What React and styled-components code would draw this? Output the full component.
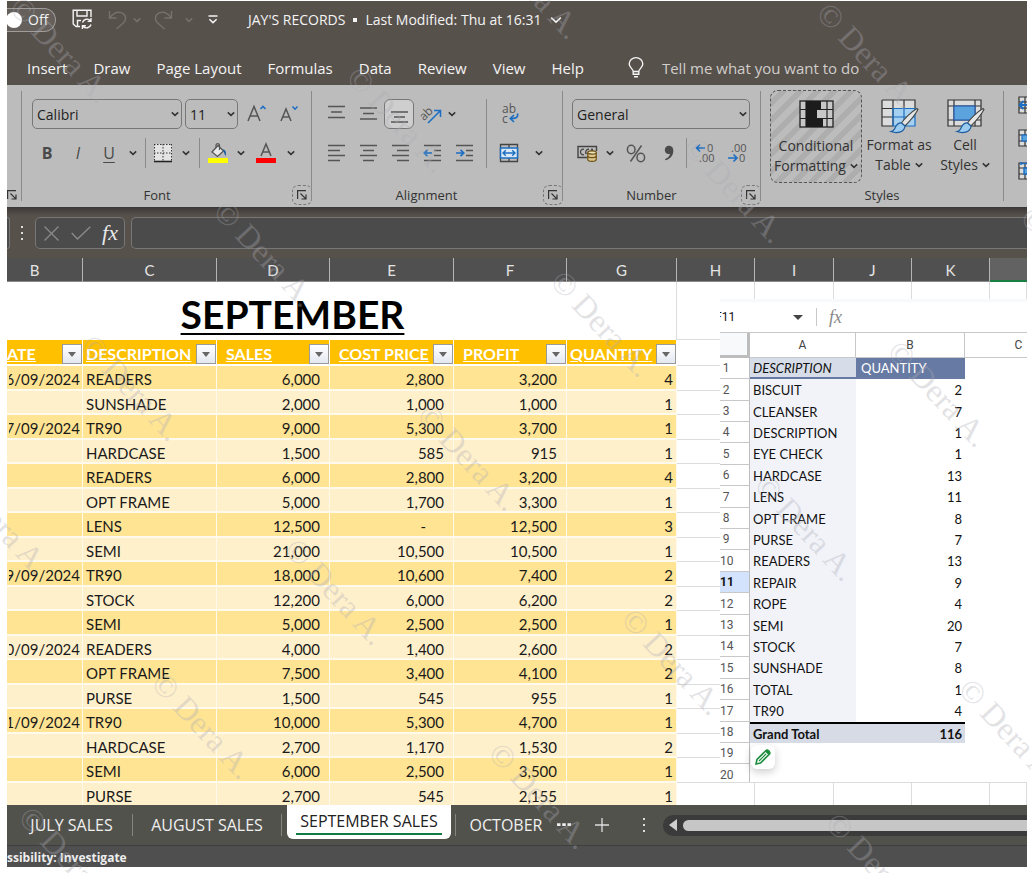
import styled, { createGlobalStyle, css } from "styled-components";

const uiFont = `"Open Sans", "Noto Sans", sans-serif`;
const cellFont = `Lato, "Open Sans", sans-serif`;

const GlobalStyle = createGlobalStyle`
  * {
    box-sizing: border-box;
  }
  body {
    margin: 0;
    background: #fff;
    font-family: ${uiFont};
  }
  button, input, select {
    margin: 0;
    padding: 0;
    border: none;
    background: none;
    color: inherit;
    font: inherit;
    outline: none;
  }
  svg {
    display: block;
    flex: none;
    overflow: visible;
  }
`;

const menuTabs = ["Insert", "Draw", "Page Layout", "Formulas", "Data", "Review", "View", "Help"];

const sales = [
  ["6/09/2024", "READERS", "6,000", "2,800", "3,200", "4"],
  ["", "SUNSHADE", "2,000", "1,000", "1,000", "1"],
  ["7/09/2024", "TR90", "9,000", "5,300", "3,700", "1"],
  ["", "HARDCASE", "1,500", "585", "915", "1"],
  ["", "READERS", "6,000", "2,800", "3,200", "4"],
  ["", "OPT FRAME", "5,000", "1,700", "3,300", "1"],
  ["", "LENS", "12,500", "-", "12,500", "3"],
  ["", "SEMI", "21,000", "10,500", "10,500", "1"],
  ["9/09/2024", "TR90", "18,000", "10,600", "7,400", "2"],
  ["", "STOCK", "12,200", "6,000", "6,200", "2"],
  ["", "SEMI", "5,000", "2,500", "2,500", "1"],
  ["0/09/2024", "READERS", "4,000", "1,400", "2,600", "2"],
  ["", "OPT FRAME", "7,500", "3,400", "4,100", "2"],
  ["", "PURSE", "1,500", "545", "955", "1"],
  ["1/09/2024", "TR90", "10,000", "5,300", "4,700", "1"],
  ["", "HARDCASE", "2,700", "1,170", "1,530", "2"],
  ["", "SEMI", "6,000", "2,500", "3,500", "1"],
  ["", "PURSE", "2,700", "545", "2,155", "1"],
];

const columns = [
  { letter: "B", width: 76, title: "ATE", pad: 0 },
  { letter: "C", width: 134, title: "DESCRIPTION", pad: 3 },
  { letter: "D", width: 113, title: "SALES", pad: 9 },
  { letter: "E", width: 124, title: "COST PRICE", pad: 9 },
  { letter: "F", width: 113, title: "PROFIT", pad: 9 },
  { letter: "G", width: 110, title: "QUANTITY", pad: 3 },
];

const emptyColumns = [
  { letter: "H", width: 78 },
  { letter: "I", width: 79 },
  { letter: "J", width: 78 },
  { letter: "K", width: 78 },
];

const pivot = [
  ["BISCUIT", 2],
  ["CLEANSER", 7],
  ["DESCRIPTION", 1],
  ["EYE CHECK", 1],
  ["HARDCASE", 13],
  ["LENS", 11],
  ["OPT FRAME", 8],
  ["PURSE", 7],
  ["READERS", 13],
  ["REPAIR", 9],
  ["ROPE", 4],
  ["SEMI", 20],
  ["STOCK", 7],
  ["SUNSHADE", 8],
  ["TOTAL", 1],
  ["TR90", 4],
];

/* ---------- icons ---------- */

const Chevron = ({ size = 8, color = "#333" }) => (
  <svg width={size} height={size} viewBox="0 0 8 8" fill="none" stroke={color} strokeWidth={size > 8 ? 1 : 1.5}>
    <path d="M0.8 2.4 4 5.4 7.2 2.4" />
  </svg>
);

const SaveIcon = () => (
  <svg width="21" height="21" viewBox="0 0 21 21" fill="none" stroke="#f4f4f4" strokeWidth="1.4">
    <path d="M8 17.5H4L1.2 15V1.2H19V8" />
    <path d="M5 1.5V7H15V1.5M5.5 17V11.5H9" />
    <path d="M10.5 13.5A4.6 4.6 0 0 1 18.6 12M19 9V12.4H15.6M19 15.5A4.6 4.6 0 0 1 11 17.2M10.4 20V16.7H13.8" />
  </svg>
);

const UndoIcon = () => (
  <svg width="19" height="20" viewBox="0 0 19 20" fill="none" stroke="#77716c" strokeWidth="1.4">
    <path d="M1.5 1V8H8.5M2 7.5C5 3.5 9 1.5 13 2.6C18 4 19 9.5 15.5 12.8L8.5 19" />
  </svg>
);

const RedoIcon = () => (
  <svg width="19" height="20" viewBox="0 0 19 20" fill="none" stroke="#77716c" strokeWidth="1.4">
    <path d="M17.5 1V8H10.5M17 7.5C14 3.5 10 1.5 6 2.6C1 4 0 9.5 3.5 12.8L10.5 19" />
  </svg>
);

const QuickAccessIcon = () => (
  <svg width="10" height="9" viewBox="0 0 10 9" fill="none" stroke="#f4f4f4" strokeWidth="1.5">
    <path d="M0.5 1H9.5M1.4 4.2 5 7.6 8.6 4.2" />
  </svg>
);

const BulbIcon = () => (
  <svg width="16" height="21" viewBox="0 0 16 21" fill="none" stroke="#f4f4f4" strokeWidth="1.4">
    <path d="M5.2 14.5C5.2 12 1.2 10.5 1.2 7A6.6 6.2 0 0 1 14.8 7C14.8 10.5 10.8 12 10.8 14.5ZM5.2 14.5V17.2H10.8V14.5M6 19.8H10" />
  </svg>
);

const LauncherIcon = () => (
  <svg width="10" height="10" viewBox="0 0 10 10" fill="none" stroke="#333" strokeWidth="1.2">
    <path d="M0.6 9V0.6H9M3.5 3.5 8.6 8.6M9 4.5V9H4.5" />
  </svg>
);

const FontSizeIcon = ({ up }) => (
  <svg width="20" height="20" viewBox="0 0 20 20" fill="none" strokeWidth="1.5">
    <path
      d={up ? "M1 17 7 2.5 13 17M3.2 12H10.8" : "M2 17 7 5 12 17M3.8 13H10.2"}
      stroke="#555"
    />
    <path d={up ? "M13.5 5 16 2.4 18.5 5" : "M13.5 2.6 16 5.2 18.5 2.6"} stroke="#1b6ec2" />
  </svg>
);

const BordersIcon = () => (
  <svg width="20" height="20" viewBox="0 0 20 20">
    <rect x="1" y="1" width="18" height="17" fill="#e4e4e4" />
    <path d="M1.5 1V18M18.5 1V18M10 1V18M1 1.5H19M1 10H19" stroke="#333" strokeDasharray="1.5 1.5" fill="none" />
    <path d="M1 18.5H19" stroke="#222" strokeWidth="1.6" />
  </svg>
);

const FillIcon = () => (
  <svg width="20" height="20" viewBox="0 0 20 20">
    <path d="M4 9 10 2.5 15.5 8 9.5 13.5Z" fill="#e8e8e8" stroke="#555" strokeWidth="1.3" />
    <path d="M8 5V2A1.8 1.8 0 0 1 11.5 2V7" fill="none" stroke="#555" strokeWidth="1.2" />
    <path d="M14.5 6.5C17.5 6.5 18.5 9 17.8 13C16.2 11.5 16.5 9.5 14.5 6.5Z" fill="#1b5c9e" />
    <rect y="15" width="20" height="5" fill="#ff0" />
  </svg>
);

const FontColorIcon = () => (
  <svg width="20" height="20" viewBox="0 0 20 20">
    <path d="M5 13 10 1 15 13M6.8 9H13.2" fill="none" stroke="#555" strokeWidth="1.5" />
    <rect y="15" width="20" height="5" fill="#f00" />
  </svg>
);

const lineShapes = {
  top: "M1 2.5H18M4 8H15M1 13.5H18",
  middle: "M1 4H18M4 9.5H15M1 15H18",
  bottom: "M1 8H18M4 13H15M1 18H18",
  left: "M1 2.5H18M1 7.5H13M1 12.5H18M1 17.5H13",
  center: "M1 2.5H18M4 7.5H15M1 12.5H18M4 17.5H15",
  right: "M1 2.5H18M6 7.5H18M1 12.5H18M6 17.5H18",
};

const LinesIcon = ({ shape }) => (
  <svg width="19" height="20" viewBox="0 0 19 20">
    <path d={lineShapes[shape]} fill="none" stroke="#555" strokeWidth="1.3" />
  </svg>
);

const IndentIcon = ({ out }) => (
  <svg width="19" height="20" viewBox="0 0 19 20" fill="none" strokeWidth="1.3">
    <path d="M1 2.5H18M11 7.5H18M11 12.5H18M1 17.5H18" stroke="#555" />
    <path d={out ? "M9 10H1.5M4.5 6.8 1.3 10 4.5 13.2" : "M1 10H8.5M5.5 6.8 8.7 10 5.5 13.2"} stroke="#1b6ec2" strokeWidth="1.7" />
  </svg>
);

const OrientationIcon = () => (
  <svg width="22" height="22" viewBox="0 0 22 22">
    <text x="0" y="15" fontFamily="Open Sans" fontSize="12" fill="#555" transform="rotate(-45 6 12)">ab</text>
    <path d="M8 20 20 8M14 7.5H20.5V14" fill="none" stroke="#1b6ec2" strokeWidth="1.5" />
  </svg>
);

const WrapIcon = () => (
  <svg width="18" height="22" viewBox="0 0 18 22">
    <text x="1" y="10" fontFamily="Open Sans" fontSize="12" fill="#555">ab</text>
    <text x="1" y="20" fontFamily="Open Sans" fontSize="12" fill="#555">c</text>
    <path d="M16.5 10.5C17.5 15 14 15.5 9.5 15.5M13 12 9.3 15.5 13 19" fill="none" stroke="#1b6ec2" strokeWidth="1.7" />
  </svg>
);

const MergeIcon = () => (
  <svg width="20" height="20" viewBox="0 0 20 20" fill="none">
    <path d="M1.5 1.5H18.5V18.5H1.5ZM10 1.5V5M10 15V18.5" stroke="#444" strokeWidth="1.3" />
    <rect x="1.5" y="5" width="17" height="10" fill="#dbe8f5" stroke="#1b6ec2" strokeWidth="1.5" />
    <path d="M4 10H16M6.8 7.2 4 10 6.8 12.8M13.2 7.2 16 10 13.2 12.8" stroke="#1b6ec2" strokeWidth="1.4" />
  </svg>
);

const CurrencyIcon = () => (
  <svg width="21" height="18" viewBox="0 0 21 18" fill="none">
    <path d="M10 13.5H1V2.5H19.5V7" stroke="#444" strokeWidth="1.4" />
    <path d="M7 5.3A2.8 2.8 0 1 0 7 10.7M12 5.3A2.8 2.8 0 0 0 9.5 10M14 7 15 5.2 16 7" stroke="#444" strokeWidth="1.3" />
    <path d="M10.8 8.5V15.5C10.8 18 19.2 18 19.2 15.5V8.5" fill="#d8c391" stroke="#6b500f" strokeWidth="1.2" />
    <ellipse cx="15" cy="8.5" rx="4.2" ry="1.6" fill="#efe3c0" stroke="#6b500f" strokeWidth="1.2" />
    <path d="M10.8 12C10.8 14.2 19.2 14.2 19.2 12" stroke="#6b500f" strokeWidth="1.2" />
  </svg>
);

const PercentIcon = () => (
  <svg width="20" height="19" viewBox="0 0 20 19" fill="none" stroke="#555" strokeWidth="1.5">
    <ellipse cx="5.2" cy="5.5" rx="3.8" ry="4.2" />
    <ellipse cx="14.8" cy="13.5" rx="3.8" ry="4.2" />
    <path d="M15.5 1.5 4.5 17.5" />
  </svg>
);

const CommaIcon = () => (
  <svg width="10" height="16" viewBox="0 0 10 16">
    <path d="M4.8 0.8C8 0.8 9.6 3.2 9.3 6.4C9 10.5 6.3 13.8 1.5 15.2L1 14C4.2 12.8 5.8 11 6 8.8C3.2 9.8 0.8 7.8 0.8 5C0.8 2.4 2.6 0.8 4.8 0.8Z" fill="#4a4a4a" />
  </svg>
);

const DecimalIcon = ({ more }) => (
  <svg width="20" height="22" viewBox="0 0 20 22" fontFamily="Open Sans" fontSize="11" fill="#555">
    <text x={more ? 12 : 4} y="10">{more ? "0" : ".00"}</text>
    <text x={more ? 4 : 12} y="20">{more ? ".00" : "0"}</text>
    <path
      d={more ? "M10 6H1.5M5 2.5 1.5 6 5 9.5" : "M1 16H10M6.5 12.5 10 16 6.5 19.5"}
      fill="none"
      stroke="#1b6ec2"
      strokeWidth="1.6"
    />
  </svg>
);

const ConditionalIcon = () => (
  <svg width="35" height="28" viewBox="0 0 35 28">
    <rect x="1" y="1" width="33" height="26" fill="#c8c8c8" stroke="#222" strokeWidth="1.3" />
    <path d="M1 9.5H34M1 18.5H34M7 1V27M28 1V27" stroke="#222" strokeWidth="1.2" />
    <path d="M7 1H22V9.5H18V18.5H24V27H7Z" fill="#1c1c1c" />
  </svg>
);

const Brush = () => (
  <>
    <path d="M36 9.5C30 13 23 20 20.5 24L24 27C28 23 34 16 37 10.5Z" fill="#e6e6e6" stroke="#444" strokeWidth="1.1" />
    <path d="M20.5 24C16 23.5 15 27 13.5 30C12.8 31.5 11.5 32.3 10 32.5C15 34.5 23.5 34 24 27Z" fill="#9ccbf0" stroke="#1b5c9e" strokeWidth="1.2" />
  </>
);

const FormatTableIcon = () => (
  <svg width="36" height="35" viewBox="0 0 36 35">
    <rect x="1" y="1" width="33" height="26" fill="#dcdcdc" />
    <rect x="12" y="9.5" width="22" height="17.5" fill="#a6d0f0" />
    <path d="M1 1H34V9.5M1 1V27H12M1 9.5H34M1 18H12M12 1V27M23 1V9.5" fill="none" stroke="#333" strokeWidth="1.2" />
    <path d="M12 9.5V27H34V9.5ZM23 9.5V27M12 18H34" fill="none" stroke="#1b6ec2" strokeWidth="1.2" />
    <Brush />
  </svg>
);

const CellStylesIcon = () => (
  <svg width="36" height="35" viewBox="0 0 36 35">
    <rect x="1" y="1" width="33" height="26" fill="#dcdcdc" />
    <path d="M1 1H34V27H1ZM1 7H34M1 21H34M7 1V27M28 1V27" fill="none" stroke="#333" strokeWidth="1.2" />
    <rect x="7" y="7" width="21" height="14" fill="#5ba3dc" stroke="#2a5db0" strokeWidth="1.2" />
    <Brush />
  </svg>
);

const CellsIcon = ({ shape }) => (
  <svg width="20" height="18" viewBox="0 0 20 18" fill="none">
    <path d="M1 1H19V17H1ZM7 1V17M1 6H19M1 12H19" fill="#dcdcdc" stroke="#333" strokeWidth="1.2" />
    {shape === "insert" && <path d="M12 9H1.5M5.5 5 1.5 9 5.5 13" stroke="#1b6ec2" strokeWidth="1.8" />}
    {shape === "delete" && <rect x="4" y="6" width="12" height="6" fill="#5ba3dc" stroke="#1b6ec2" strokeWidth="1.2" />}
    {shape === "format" && <path d="M6 6H16V12H6ZM3 0V3M3 1.5H12" fill="#5ba3dc" stroke="#1b6ec2" strokeWidth="1.4" />}
  </svg>
);

const PencilIcon = () => (
  <svg width="16" height="16" viewBox="0 0 16 16">
    <path d="M1 15 2 10.5 11 1.5C12.5 0.2 15.8 3.2 14.5 5L5.5 14Z" fill="#fff" stroke="#1e8e3e" strokeWidth="1.6" />
    <path d="M10 2.5 11.8 1C13 0 16 3 15 4.2L13.5 6Z" fill="#1e8e3e" />
    <path d="M4 12 11 5" stroke="#1e8e3e" strokeWidth="1.2" />
  </svg>
);

/* ---------- page ---------- */

const Page = styled.div`
  position: relative;
  min-height: 100vh;
  padding: 1px 5px 5px 7px;
  overflow: hidden;
`;

const Workbook = styled.main`
  overflow: hidden;
  background: #57514c;
`;

const TitleBar = styled.header`
  display: flex;
  align-items: center;
  height: 37px;
  color: #f4f4f4;
  font-size: 14px;
  white-space: nowrap;
`;

const AutoSave = styled.label`
  display: flex;
  align-items: center;
  gap: 6px;
  width: 50px;
  height: 24px;
  margin: 0 11px 0 -1px;
  border: 1px solid #a09c99;
  border-left: none;
  border-radius: 0 12px 12px 0;
  background: #65605c;
  font-size: 14px;
  input {
    appearance: none;
    width: 16px;
    height: 16px;
    border-radius: 50%;
    background: #fff;
  }
`;

const QuickButton = styled.button`
  display: flex;
  align-items: center;
  justify-content: center;
  width: ${({ $w }) => $w}px;
  height: 24px;
`;

const FileName = styled.h1`
  display: flex;
  align-items: center;
  gap: 8px;
  margin: 0 0 0 11px;
  font-size: 14px;
  font-weight: 400;
  i {
    width: 4px;
    height: 4px;
    background: #f4f4f4;
  }
`;

const MenuBar = styled.nav`
  display: flex;
  align-items: center;
  gap: 26px;
  height: 47px;
  padding: 12px 20px 0;
  color: #f4f4f4;
  font-size: 15px;
  white-space: nowrap;
`;

const TellMe = styled.label`
  display: flex;
  flex: 1;
  align-items: center;
  gap: 18px;
  margin-left: 18px;
  input {
    flex: 1;
    min-width: 0;
    &::placeholder {
      color: #d0cdca;
      opacity: 1;
    }
  }
`;

/* ---------- ribbon ---------- */

const Ribbon = styled.section`
  display: flex;
  height: 123px;
  overflow: hidden;
  background: #bcbcbc;
  border-bottom: 1px solid #3b3836;
  color: #333;
  font-size: 14px;
`;

const Group = styled.div`
  position: relative;
  display: flex;
  flex: none;
  flex-direction: column;
  justify-content: space-between;
  width: ${({ $w }) => $w}px;
  padding: ${({ $top = 14 }) => $top}px 0 1px ${({ $left = 9 }) => $left}px;
  &::after {
    content: "";
    position: absolute;
    top: 6px;
    right: 0;
    bottom: 6px;
    width: 1px;
    background: #8a8a8a;
  }
`;

const GroupFooter = styled.div`
  display: flex;
  align-items: center;
  height: 22px;
  font-size: 13px;
  span {
    flex: 1;
    margin-right: 10px;
    text-align: center;
  }
`;

const Launcher = styled.button`
  display: flex;
  align-items: center;
  justify-content: center;
  width: 20px;
  height: 20px;
  border: ${({ $plain }) => ($plain ? "none" : "1px dashed #777")};
  border-radius: 6px;
`;

const ClipboardLauncher = styled(Launcher)`
  width: 10px;
`;

const Rows = styled.div`
  display: flex;
  flex-direction: column;
  gap: 9px;
`;

const Row = styled.div`
  display: flex;
  align-items: center;
  height: 30px;
`;

const Side = styled.div`
  display: flex;
`;

const Tool = styled.button`
  display: flex;
  flex: none;
  align-items: center;
  justify-content: center;
  width: ${({ $w = 32 }) => $w}px;
  height: 30px;
  color: #4a4a4a;
  font-size: 16px;
  font-weight: ${({ $bold }) => ($bold ? 700 : 400)};
  font-style: ${({ $italic }) => ($italic ? "italic" : "normal")};
  ${({ $underline }) => $underline && css`
    text-decoration: underline;
    text-underline-offset: 3px;
  `}
  ${({ $pressed }) => $pressed && css`
    border: 1px solid #777;
    border-radius: 6px;
    background: #cecece;
  `}
`;

const Rule = styled.span`
  flex: none;
  align-self: stretch;
  width: 1px;
  margin: 0 ${({ $gap = 3 }) => $gap}px;
  background: #8a8a8a;
`;

const SelectBox = styled.div`
  position: relative;
  display: flex;
  width: ${({ $w }) => $w}px;
  height: 30px;
  margin-right: 3px;
  select {
    width: 100%;
    padding-left: 4px;
    border: 1px solid #777;
    border-radius: 5px;
    appearance: none;
    color: #222;
    font-size: 14px;
  }
  svg {
    position: absolute;
    top: 11px;
    right: 3px;
    pointer-events: none;
  }
`;

const StyleButtons = styled.div`
  display: flex;
  gap: 4px;
`;

const StyleButton = styled.button`
  display: flex;
  flex-direction: column;
  align-items: center;
  width: ${({ $w }) => $w}px;
  height: 93px;
  padding-top: 9px;
  border-radius: 8px;
  font-size: 14px;
  line-height: 20px;
  white-space: nowrap;
  ${({ $striped }) => $striped && css`
    border: 1px dashed #555;
    background: repeating-linear-gradient(135deg, #bcbcbc 0 6px, #aeaeae 6px 12px);
  `}
  .art {
    height: 36px;
  }
  .more {
    display: flex;
    align-items: center;
    gap: 4px;
  }
`;

const CellTools = styled.div`
  display: flex;
  flex: 1;
  flex-direction: column;
  gap: 15px;
  padding: 11px 0 0 14px;
  overflow: hidden;
`;

/* ---------- formula bar ---------- */

const FormulaBar = styled.div`
  display: flex;
  align-items: center;
  height: 50px;
  background: linear-gradient(#3f3b38, #57514c 8px);
`;

const NameBoxEnd = styled.span`
  width: 3px;
  height: 32px;
  border: 1px solid #777;
  border-left: none;
  border-radius: 0 5px 5px 0;
  background: #4b4b4b;
`;

const Dots = styled.span`
  flex: none;
  width: 2px;
  height: 14px;
  margin: 0 12px 0 11px;
  background: repeating-linear-gradient(#ddd 0 2px, transparent 2px 6px);
`;

const FormulaButtons = styled.div`
  display: flex;
  align-items: center;
  justify-content: space-between;
  width: 90px;
  height: 32px;
  margin-right: 6px;
  padding: 0 6px 0 8px;
  border: 1px solid #777;
  border-radius: 5px;
  background: #4b4b4b;
  color: #e8e8e8;
  .fx {
    font: italic 22px/24px "Liberation Serif", serif;
  }
`;

const FormulaInput = styled.input`
  flex: 1;
  height: 32px;
  border: 1px solid #777;
  border-right: none;
  border-radius: 5px 0 0 5px;
  background: #4b4b4b;
  color: #fff;
`;

/* ---------- worksheet ---------- */

const Sheet = styled.section`
  position: relative;
  height: 547px;
  overflow: hidden;
  background: #fff;
`;

const Grid = styled.table`
  width: 100%;
  border-spacing: 0;
  table-layout: fixed;
  color: #1a1a1a;
  font-family: ${cellFont};
  font-size: 15px;
  th, td {
    padding: 0;
    white-space: nowrap;
  }
`;

const Letters = styled.tr`
  height: 24px;
  background: #505050;
  th {
    border-right: 1px solid #b5b5b5;
    border-bottom: 1px solid #8a8a8a;
    color: #e4e4e4;
    font-weight: 400;
  }
  th:first-child {
    padding-right: 20px;
  }
  th:last-child {
    border-right: none;
    border-bottom: 2px solid #1a7f43;
    background: #626262;
  }
`;

const EmptyCell = styled.td`
  border-right: 1px solid #dcdcdc;
  border-bottom: 1px solid #dcdcdc;
`;

const TitleRow = styled.tr`
  height: 58px;
`;

const SheetTitle = styled.th`
  && {
    padding: 5px 98px 0 0;
  }
  border-right: 1px solid #dcdcdc;
  color: #000;
  font-size: 39px;
  line-height: 52px;
  font-weight: 700;
  text-align: center;
  text-decoration: underline;
  text-decoration-thickness: 2px;
  text-underline-offset: 4px;
`;

const HeaderRow = styled.tr`
  height: 26px;
`;

const HeaderCell = styled.th`
  border-right: 1px solid #fff;
  border-bottom: 2px solid #fff;
  background: #ffc000;
  color: #fff;
  font-size: 16px;
  > div {
    display: flex;
    align-items: flex-end;
    justify-content: space-between;
    height: 24px;
    padding-left: ${({ $pad }) => $pad}px;
    line-height: 20px;
    text-decoration: underline;
  }
`;

const FilterButton = styled.button`
  display: flex;
  flex: none;
  align-items: center;
  justify-content: center;
  width: 20px;
  height: 20px;
  border: 1px solid #9a9a9a;
  background: linear-gradient(#fff, #e4e8f0);
  &::before {
    content: "";
    border: 4px solid transparent;
    border-top: 5px solid #666;
    border-bottom: none;
  }
`;

const SaleRow = styled.tr`
  height: 24px;
  background: #fff0cc;
  &:nth-child(odd) {
    height: 25px;
    background: #ffe494;
  }
`;

const SaleCell = styled.td`
  border-right: 1px solid #fffaec;
  border-bottom: 2px solid #fffaec;
  line-height: 18px;
  && {
    padding: 3px ${({ $pad }) => $pad}px 0;
  }
  text-align: ${({ $right }) => ($right ? "right" : "left")};
`;

const DateText = styled.div`
  display: flex;
  justify-content: flex-end;
  overflow: hidden;
`;

const BlankCell = styled(EmptyCell)`
  background: #fff;
`;

/* ---------- pasted pivot sheet ---------- */

const Pasted = styled.div`
  position: absolute;
  top: 41px;
  left: 713px;
  right: 0;
  height: 483px;
  overflow: hidden;
  border-top: 3px solid #f8f9fa;
  background: #fff;
  color: #111;
  font-family: ${cellFont};
  font-size: 13px;
`;

const PastedBar = styled.div`
  display: flex;
  align-items: center;
  height: 31px;
  border-bottom: 1px solid #c8c8c8;
  font: 12px Roboto, sans-serif;
  .cell {
    width: 78px;
    margin-left: -5px;
  }
  .caret {
    border: 5px solid transparent;
    border-top-color: #444;
    border-bottom: none;
  }
  .line {
    width: 1px;
    height: 18px;
    margin: 0 12px 0 13px;
    background: #c8c8c8;
  }
  .fx {
    color: #888;
    font: italic 18px "Liberation Serif", serif;
  }
`;

const PivotTable = styled.table`
  width: 100%;
  border-spacing: 0;
  table-layout: fixed;
  th, td {
    padding: 0 3px;
    text-align: left;
    font-weight: 400;
    line-height: 18px;
    white-space: nowrap;
  }
  thead th {
    height: 25px;
    border-right: 1px solid #c8c8c8;
    border-bottom: 1px solid #c8c8c8;
    color: #444;
    font: 12px Roboto, sans-serif;
    text-align: center;
  }
  thead th:first-child {
    border-right: 3px solid #bdbdbd;
    border-bottom: 3px solid #bdbdbd;
    background: #f8f9fa;
  }
`;

const PivotRow = styled.tr`
  height: 21px;
  &:nth-child(5n + 2), &:nth-child(5n) {
    height: 22px;
  }
  td:nth-child(2) {
    background: ${({ $head }) => ($head ? "#d6dde8" : "#f1f3f9")};
    font-style: ${({ $head }) => ($head ? "italic" : "normal")};
  }
  td:nth-child(3) {
    text-align: right;
  }
  ${({ $head }) => $head && css`
    td {
      line-height: 16px;
    }
    td:nth-child(2), td:nth-child(3) {
      border-bottom: 2px solid #667aa3;
    }
    td:nth-child(3) {
      padding-left: 5px;
      background: #667aa3;
      color: #fff;
      text-align: left;
    }
  `}
  ${({ $total }) => $total && css`
    td:nth-child(2), td:nth-child(3) {
      border-top: 2px solid #000;
      background: #d6dbe6;
      font-weight: 700;
    }
  `}
  ${({ $blank }) => $blank && css`
    td:nth-child(2) {
      background: none;
    }
  `}
`;

const RowNumber = styled.th`
  && {
    padding: 0 17px 0 0;
    border-right: 1px solid #bdbdbd;
    border-bottom: 1px solid #c8c8c8;
    background: ${({ $active }) => ($active ? "#d3e3fd" : "#fff")};
    color: ${({ $active }) => ($active ? "#111" : "#555")};
    font: ${({ $active }) => ($active ? 700 : 400)} 12px/18px Roboto, sans-serif;
    text-align: center;
  }
`;

const EditBadge = styled.button`
  position: absolute;
  top: 443px;
  left: 31px;
  display: flex;
  align-items: center;
  justify-content: center;
  width: 24px;
  height: 24px;
  border-radius: 6px;
  background: #fff;
  box-shadow: 0 3px 8px rgba(0, 0, 0, 0.2);
`;

/* ---------- bottom bars ---------- */

const TabBar = styled.nav`
  display: flex;
  align-items: center;
  height: 40px;
  padding-left: 4px;
  background: #52524d;
  color: #f0f0f0;
  font-size: 16px;
  white-space: nowrap;
`;

const SheetTab = styled.button`
  flex: none;
  width: ${({ $w }) => $w}px;
  height: 40px;
  overflow: hidden;
  text-align: center;
  svg {
    margin: 0 auto;
  }
  ${({ $active }) => $active && css`
    align-self: flex-start;
    height: 34px;
    margin-left: 5px;
    margin-right: 4px;
    border-radius: 0 0 6px 6px;
    background: #fff;
    color: #222;
    span {
      display: block;
      margin: 0 9px;
      border-bottom: 2px solid #107c41;
      line-height: 24px;
    }
  `}
`;

const TabRule = styled.span`
  flex: none;
  width: 1px;
  height: 22px;
  background: #85857f;
`;

const ScrollTrack = styled.div`
  display: flex;
  flex: 1;
  align-items: center;
  gap: 6px;
  height: 21px;
  margin-left: 6px;
  padding-left: 6px;
  border-radius: 10px 0 0 10px;
  background: #3b3b3b;
  &::before {
    content: "";
    border: 6px solid transparent;
    border-right: 8px solid #d0d0d0;
    border-left: none;
  }
  &::after {
    content: "";
    flex: 1;
    height: 11px;
    border-radius: 6px 0 0 6px;
    background: #c6c6c6;
  }
`;

const StatusBar = styled.footer`
  height: 22px;
  border-top: 1px solid #3f3f3f;
  background: #4f4f4f;
  color: #eee;
  font-size: 12px;
  font-weight: 700;
  line-height: 24px;
`;

/* ---------- watermark ---------- */

const WatermarkLayer = styled.div`
  position: absolute;
  inset: 0;
  overflow: hidden;
  pointer-events: none;
`;

const Mark = styled.span`
  position: absolute;
  color: rgba(172, 172, 180, 0.34);
  font: 32px/30px "Liberation Serif", serif;
  white-space: nowrap;
  transform: rotate(47deg);
  transform-origin: 12px 15px;
`;

const marks = [];
for (let i = -3; i < 8; i++) {
  for (let j = -3; j < 9; j++) {
    const x = 24 + 337 * i - 133 * j;
    const y = 10 + 70 * i + 134 * j;
    if (x > -90 && x < 1045 && y > -90 && y < 885) marks.push({ x, y });
  }
}

const Footer = ({ children }) => (
  <GroupFooter>
    <span>{children}</span>
    <Launcher aria-label={`${children} settings`}>
      <LauncherIcon />
    </Launcher>
  </GroupFooter>
);

const Blanks = ({ cell: Cell = BlankCell }) => (
  <>
    {emptyColumns.map((col) => (
      <Cell key={col.letter} />
    ))}
    <Cell />
  </>
);

const FontGroup = () => (
  <Group $w={290} $left={10}>
    <Rows>
      <Row>
        <SelectBox $w={150}>
          <select aria-label="Font"><option>Calibri</option></select>
          <Chevron />
        </SelectBox>
        <SelectBox $w={53}>
          <select aria-label="Font size"><option>11</option></select>
          <Chevron />
        </SelectBox>
        <Tool aria-label="Increase font size"><FontSizeIcon up /></Tool>
        <Tool aria-label="Decrease font size"><FontSizeIcon /></Tool>
      </Row>
      <Row>
        <Tool $w={30} $bold>B</Tool>
        <Tool $italic>I</Tool>
        <Tool $w={30} $underline>U</Tool>
        <Tool $w={18} aria-label="Underline options"><Chevron /></Tool>
        <Rule />
        <Tool $w={28} aria-label="Borders"><BordersIcon /></Tool>
        <Tool $w={18} aria-label="Border options"><Chevron /></Tool>
        <Rule $gap={4} />
        <Tool $w={28} aria-label="Fill colour"><FillIcon /></Tool>
        <Tool $w={18} aria-label="Fill options"><Chevron /></Tool>
        <Tool aria-label="Font colour"><FontColorIcon /></Tool>
        <Tool $w={18} aria-label="Font colour options"><Chevron /></Tool>
      </Row>
    </Rows>
    <Footer>Font</Footer>
  </Group>
);

const AlignmentGroup = () => (
  <Group $w={251} $left={8}>
    <Side>
      <Rows>
        <Row>
          <Tool aria-label="Top align"><LinesIcon shape="top" /></Tool>
          <Tool aria-label="Middle align"><LinesIcon shape="middle" /></Tool>
          <Tool $w={30} $pressed aria-label="Bottom align"><LinesIcon shape="bottom" /></Tool>
          <Tool $w={34} aria-label="Orientation"><OrientationIcon /></Tool>
          <Tool $w={8} aria-label="Orientation options"><Chevron /></Tool>
        </Row>
        <Row>
          <Tool aria-label="Align left"><LinesIcon shape="left" /></Tool>
          <Tool aria-label="Centre"><LinesIcon shape="center" /></Tool>
          <Tool aria-label="Align right"><LinesIcon shape="right" /></Tool>
          <Tool aria-label="Decrease indent"><IndentIcon out /></Tool>
          <Tool aria-label="Increase indent"><IndentIcon /></Tool>
        </Row>
      </Rows>
      <Rule $gap={6} />
      <Rows>
        <Row>
          <Tool $w={34} aria-label="Wrap text"><WrapIcon /></Tool>
        </Row>
        <Row>
          <Tool aria-label="Merge and centre"><MergeIcon /></Tool>
          <Tool $w={28} aria-label="Merge options"><Chevron /></Tool>
        </Row>
      </Rows>
    </Side>
    <Footer>Alignment</Footer>
  </Group>
);

const NumberGroup = () => (
  <Group $w={198}>
    <Rows>
      <Row>
        <SelectBox $w={178}>
          <select aria-label="Number format"><option>General</option></select>
          <Chevron />
        </SelectBox>
      </Row>
      <Row>
        <Tool $w={30} aria-label="Accounting format"><CurrencyIcon /></Tool>
        <Tool $w={16} aria-label="Accounting options"><Chevron /></Tool>
        <Tool $w={36} aria-label="Percent"><PercentIcon /></Tool>
        <Tool $w={30} aria-label="Comma style"><CommaIcon /></Tool>
        <Rule $gap={2} />
        <Tool aria-label="Increase decimal"><DecimalIcon more /></Tool>
        <Tool aria-label="Decrease decimal"><DecimalIcon /></Tool>
      </Row>
    </Rows>
    <Footer>Number</Footer>
  </Group>
);

const StylesGroup = () => (
  <Group $w={243} $top={5}>
    <StyleButtons>
      <StyleButton $w={92} $striped>
        <span className="art"><ConditionalIcon /></span>
        Conditional
        <span className="more">Formatting <Chevron /></span>
      </StyleButton>
      <StyleButton $w={66}>
        <span className="art"><FormatTableIcon /></span>
        Format as
        <span className="more">Table <Chevron /></span>
      </StyleButton>
      <StyleButton $w={58}>
        <span className="art"><CellStylesIcon /></span>
        Cell
        <span className="more">Styles <Chevron /></span>
      </StyleButton>
    </StyleButtons>
    <GroupFooter>
      <span>Styles</span>
    </GroupFooter>
  </Group>
);

const PivotSheet = () => (
  <Pasted>
    <PastedBar>
      <span className="cell">F11</span>
      <span className="caret" />
      <span className="line" />
      <span className="fx">fx</span>
    </PastedBar>
    <PivotTable>
      <colgroup>
        <col width="30" />
        <col width="106" />
        <col width="109" />
        <col width="108" />
      </colgroup>
      <thead>
        <tr>
          <th />
          <th>A</th>
          <th>B</th>
          <th>C</th>
        </tr>
      </thead>
      <tbody>
        <PivotRow $head>
          <RowNumber>1</RowNumber>
          <td>DESCRIPTION</td>
          <td>QUANTITY</td>
          <td />
        </PivotRow>
        {pivot.map(([name, count], index) => (
          <PivotRow key={name}>
            <RowNumber $active={index === 9}>{index + 2}</RowNumber>
            <td>{name}</td>
            <td>{count}</td>
            <td />
          </PivotRow>
        ))}
        <PivotRow $total>
          <RowNumber>18</RowNumber>
          <td>Grand Total</td>
          <td>116</td>
          <td />
        </PivotRow>
        {[19, 20].map((n) => (
          <PivotRow key={n} $blank>
            <RowNumber>{n}</RowNumber>
            <td />
            <td />
            <td />
          </PivotRow>
        ))}
      </tbody>
    </PivotTable>
    <EditBadge aria-label="Edit pivot table">
      <PencilIcon />
    </EditBadge>
  </Pasted>
);

const App = () => {
  return (
    <Page>
      <GlobalStyle />
      <Workbook>
        <TitleBar>
          <AutoSave>
            <input type="checkbox" />
            Off
          </AutoSave>
          <QuickButton $w={30} aria-label="Save"><SaveIcon /></QuickButton>
          <QuickButton $w={40} aria-label="Undo"><UndoIcon /></QuickButton>
          <QuickButton $w={0} aria-label="Undo options"><Chevron color="#77716c" /></QuickButton>
          <QuickButton $w={52} aria-label="Redo"><RedoIcon /></QuickButton>
          <QuickButton $w={0} aria-label="Redo options"><Chevron color="#77716c" /></QuickButton>
          <QuickButton $w={48} aria-label="Customise toolbar"><QuickAccessIcon /></QuickButton>
          <FileName>
            JAY'S RECORDS <i /> Last Modified: Thu at 16:31
            <Chevron size={12} color="#f4f4f4" />
          </FileName>
        </TitleBar>
        <MenuBar>
          {menuTabs.map((tab) => (
            <button key={tab} type="button">{tab}</button>
          ))}
          <TellMe>
            <BulbIcon />
            <input type="text" aria-label="Tell me" placeholder="Tell me what you want to do" />
          </TellMe>
        </MenuBar>

        <Ribbon>
          <Group $w={15} $left={0}>
            <span />
            <GroupFooter>
              <ClipboardLauncher $plain aria-label="Clipboard settings"><LauncherIcon /></ClipboardLauncher>
            </GroupFooter>
          </Group>
          <FontGroup />
          <AlignmentGroup />
          <NumberGroup />
          <StylesGroup />
          <CellTools>
            <CellsIcon shape="insert" />
            <CellsIcon shape="delete" />
            <CellsIcon shape="format" />
          </CellTools>
        </Ribbon>

        <FormulaBar>
          <NameBoxEnd />
          <Dots />
          <FormulaButtons>
            <svg width="15" height="15" viewBox="0 0 15 15" stroke="#8a8a8a" strokeWidth="1.3">
              <path d="M0.5 0.5 14.5 14.5M14.5 0.5 0.5 14.5" />
            </svg>
            <svg width="20" height="14" viewBox="0 0 20 14" fill="none" stroke="#8a8a8a" strokeWidth="1.4">
              <path d="M0.7 7 6.5 13 19.3 0.7" />
            </svg>
            <span className="fx">fx</span>
          </FormulaButtons>
          <FormulaInput aria-label="Formula" />
        </FormulaBar>

        <Sheet>
          <Grid>
            <colgroup>
              {[...columns, ...emptyColumns].map((col) => (
                <col key={col.letter} width={col.width} />
              ))}
              <col />
            </colgroup>
            <thead>
              <Letters>
                {[...columns, ...emptyColumns].map((col) => (
                  <th key={col.letter}>{col.letter}</th>
                ))}
                <th />
              </Letters>
              <TitleRow>
                <SheetTitle colSpan={6}>SEPTEMBER</SheetTitle>
                <Blanks cell={EmptyCell} />
              </TitleRow>
              <HeaderRow>
                {columns.map((col) => (
                  <HeaderCell key={col.letter} $pad={col.pad}>
                    <div>
                      {col.title}
                      <FilterButton aria-label={`Filter ${col.title}`} />
                    </div>
                  </HeaderCell>
                ))}
                <Blanks />
              </HeaderRow>
            </thead>
            <tbody>
              {sales.map(([date, item, ...numbers], index) => (
                <SaleRow key={index}>
                  <SaleCell $right $pad={2}>
                    <DateText>{date}</DateText>
                  </SaleCell>
                  <SaleCell $pad={3}>{item}</SaleCell>
                  {numbers.map((value, n) => (
                    <SaleCell key={n} $right $pad={n === 3 ? 3 : value === "-" ? 27 : 9}>{value}</SaleCell>
                  ))}
                  <Blanks />
                </SaleRow>
              ))}
            </tbody>
          </Grid>
          <PivotSheet />
        </Sheet>

        <TabBar>
          <SheetTab $w={121}>JULY SALES</SheetTab>
          <TabRule />
          <SheetTab $w={148}>AUGUST SALES</SheetTab>
          <TabRule />
          <SheetTab $w={164} $active><span>SEPTEMBER SALES</span></SheetTab>
          <TabRule />
          <SheetTab $w={100}>OCTOBER</SheetTab>
          <SheetTab $w={16} aria-label="More sheets">
            <svg width="14" height="4" viewBox="0 0 16 4" fill="#eee">
              <path d="M0 0H4V3H0ZM6 0H10V3H6ZM12 0H16V3H12Z" />
            </svg>
          </SheetTab>
          <SheetTab $w={60} aria-label="New sheet">
            <svg width="14" height="14" viewBox="0 0 14 14" stroke="#ddd" strokeWidth="1.3">
              <path d="M0 7H14M7 0V14" />
            </svg>
          </SheetTab>
          <Dots />
          <ScrollTrack />
        </TabBar>
        <StatusBar>ssibility: Investigate</StatusBar>
      </Workbook>

      <WatermarkLayer>
        {marks.map(({ x, y }) => (
          <Mark key={`${x}:${y}`} style={{ left: x - 12, top: y - 15 }}>© Dera A.</Mark>
        ))}
      </WatermarkLayer>
    </Page>
  );
};

export default App;
